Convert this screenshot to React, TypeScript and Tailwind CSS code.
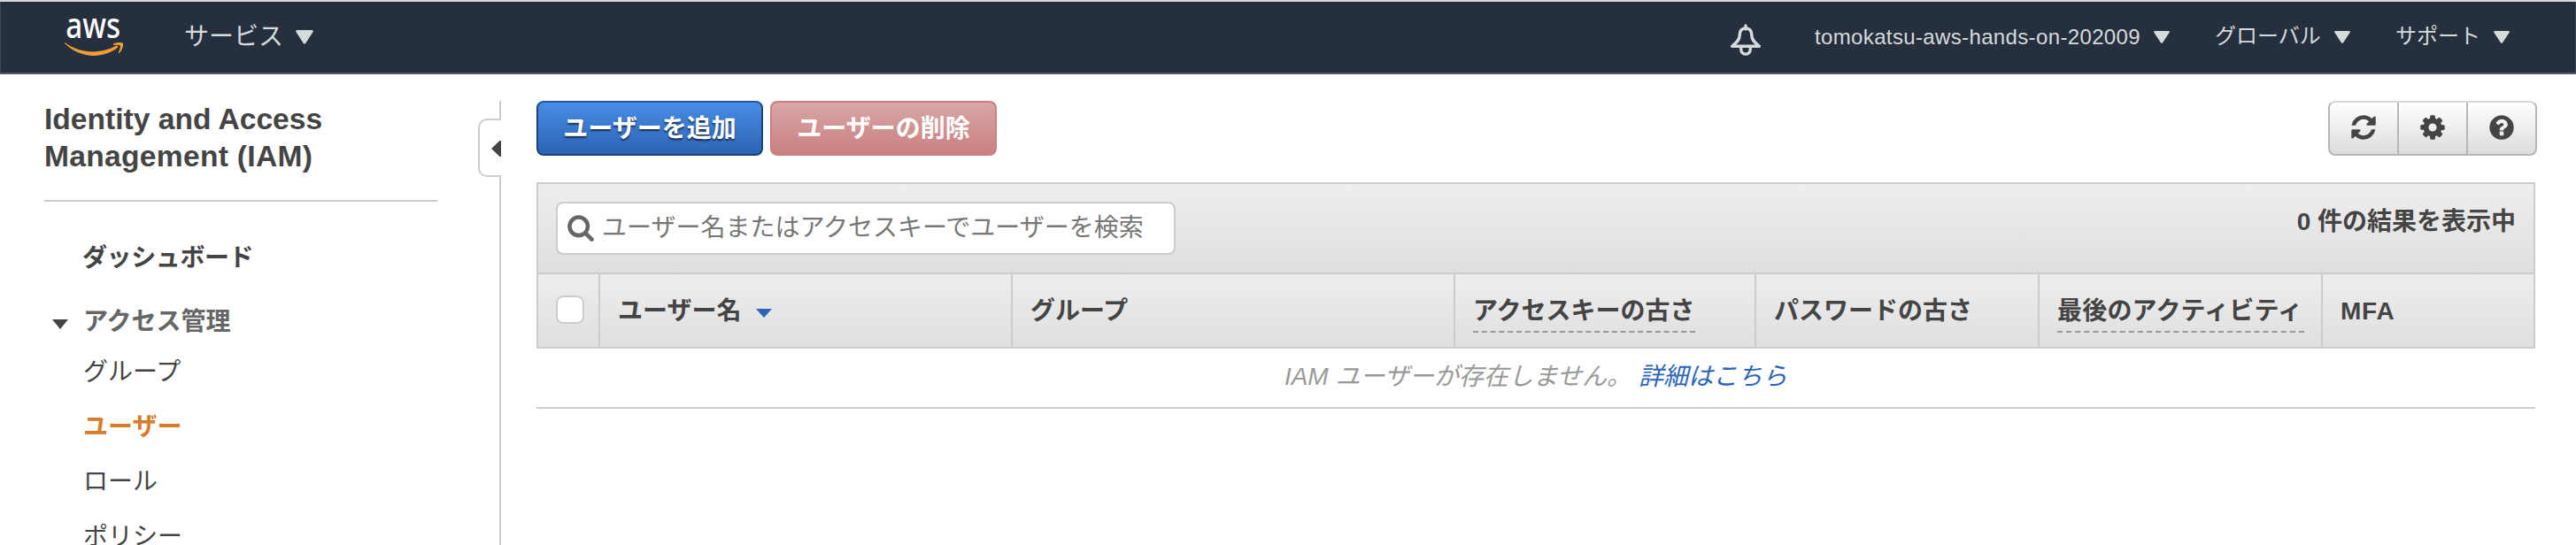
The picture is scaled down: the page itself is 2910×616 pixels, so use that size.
import React from "react";

const icons = {
  refresh:
    "M1639 1056q0 5-1 7-64 268-268 434.5t-478 166.5q-146 0-282.5-55t-243.5-157l-129 129q-19 19-45 19t-45-19-19-45v-448q0-26 19-45t45-19h448q26 0 45 19t19 45-19 45l-137 137q71 66 161 102t187 36q134 0 250-65t186-179q11-17 53-117 8-23 30-23h192q13 0 22.5 9.5t9.5 22.5zm25-800v448q0 26-19 45t-45 19h-448q-26 0-45-19t-19-45 19-45l138-138q-148-137-349-137-134 0-250 65t-186 179q-11 17-53 117-8 23-30 23h-199q-13 0-22.5-9.5t-9.5-22.5v-7q65-268 270-434.5t480-166.5q146 0 284 55.5t245 156.5l130-129q19-19 45-19t45 19 19 45z",
  cog: "M1152 896q0-106-75-181t-181-75-181 75-75 181 75 181 181 75 181-75 75-181zm512-109v222q0 12-8 23t-20 13l-185 28q-19 54-39 91 35 50 107 138 10 12 10 25t-9 23q-27 37-99 108t-94 71q-12 0-26-9l-138-108q-44 23-91 38-16 136-29 186-7 28-36 28h-222q-14 0-24.5-8.5t-11.5-21.5l-28-184q-49-16-90-37l-141 107q-10 9-25 9-14 0-25-11-126-114-165-168-7-10-7-23 0-12 8-23 15-21 51-66.5t54-70.5q-27-50-41-99l-183-27q-13-2-21-12.5t-8-23.5v-222q0-12 8-23t19-13l186-28q14-46 39-92-40-57-107-138-10-12-10-24 0-10 9-23 26-36 98.5-107.5t94.5-71.5q13 0 26 10l138 107q44-23 91-38 16-136 29-186 7-28 36-28h222q14 0 24.5 8.5t11.5 21.5l28 184q49 16 90 37l142-107q9-9 24-9 13 0 25 10 129 119 165 170 7 8 7 22 0 12-8 23-15 21-51 66.5t-54 70.5q26 50 41 98l183 28q13 2 21 12.5t8 23.5z",
  question:
    "M1024 1376v-192q0-14-9-23t-23-9h-192q-14 0-23 9t-9 23v192q0 14 9 23t23 9h192q14 0 23-9t9-23zm256-672q0-88-55.5-163t-138.5-116-170-41q-243 0-371 213-15 24 8 42l132 100q7 6 19 6 16 0 25-12 53-68 86-92 34-24 86-24 48 0 85.5 26t37.5 59q0 38-20 61t-68 45q-63 28-115.5 86.5t-52.5 125.5v36q0 14 9 23t23 9h192q14 0 23-9t9-23q0-19 21.5-49.5t54.5-49.5q32-18 49-28.5t46-35 44.5-48 28-60.5 12.5-81zm384 192q0 209-103 385.5t-279.5 279.5-385.5 103-385.5-103-279.5-279.5-103-385.5 103-385.5 279.5-279.5 385.5-103 385.5 103 279.5 279.5 103 385.5z",
  search:
    "M1216 832q0-185-131.5-316.5t-316.5-131.5-316.5 131.5-131.5 316.5 131.5 316.5 316.5 131.5 316.5-131.5 131.5-316.5zm512 832q0 52-38 90t-90 38q-54 0-90-38l-343-342q-179 124-399 124-143 0-273.5-55.5t-225-150-150-225-55.5-273.5 55.5-273.5 150-225 225-150 273.5-55.5 273.5 55.5 225 150 150 225 55.5 273.5q0 220-124 399l343 343q37 37 37 90z",
};

function Icon({ name, className }: { name: keyof typeof icons; className: string }) {
  return (
    <svg viewBox="0 0 1792 1792" className={className} fill="currentColor">
      <path d={icons[name]} />
    </svg>
  );
}

function NavCaret({ className }: { className: string }) {
  return (
    <svg viewBox="0 0 20 16" className={className} preserveAspectRatio="none" fill="#d5dbdb">
      <path d="M1.4 0H18.6Q20.4 .4 19.6 2L11.2 15Q10 16.6 8.8 15L.4 2Q-.4 .4 1.4 0Z" />
    </svg>
  );
}

function AwsLogo() {
  return (
    <svg viewBox="0 0 68 60" className="ml-[71px] mt-[4px] h-[60px] w-[68px] overflow-visible">
      <text
        transform="translate(2.2 36.800) scale(.85 1)"
        fontFamily="'Noto Sans'"
        fontSize="39"
        fontWeight="500"
        fill="#fff"
      >
        aws
      </text>
      <g transform="translate(0 13)" fill="#f09d34">
        <path d="M1.6 29.2C11 36.2 22 39.4 33.500 39.400 42 39.400 52 37 59.400 32.600 60.800 32 62.200 33.900 60.700 35.100 53.500 40.800 43.500 44 34.200 44 21.500 44 9.800 38.800 1.300 30.300.6 29.600 1 28.800 1.600 29.200Z" />
        <path d="M56.500 30.300C60.500 28.400 66 28.800 66.900 30 67.800 31.200 66.500 37.600 62.700 41 62.100 41.500 61.500 41.200 61.800 40.500 62.700 38.400 64.500 33.700 63.700 32.600 62.900 31.600 59 31.600 57 31.900 55.700 32 55.600 30.700 56.500 30.300Z" />
      </g>
    </svg>
  );
}

function Header() {
  return (
    <header className="h-[84px] border-t-2 border-b-2 border-t-[#d5d8df] border-b-[#545b66] bg-[#262f3e] text-[#d5dbdb]">
      <div className="flex h-[80px] items-start border-x border-[#3c4554]">
        <AwsLogo />
        <div className="ml-[68px] flex items-start pt-[20px]">
          <span className="w-[126px] text-[28px] leading-10">サービス</span>
          <NavCaret className="mt-3 h-4 w-5" />
        </div>
        <svg
          viewBox="0 0 36 36"
          className="mt-[25px] ml-[1600px] h-9 w-9"
          fill="none"
          stroke="#d5dbdb"
          strokeWidth="3.4"
          strokeLinejoin="round"
        >
          <path d="M18 4.800C13.500 5.200 11.200 8.500 11.200 13 11.200 18 8 21 2.600 25.300H33.400C28 21 24.800 18 24.800 13 24.800 8.500 22.500 5.200 18 4.800Z" />
          <path d="M18 2V6" strokeLinecap="round" />
          <path d="M12.700 26V28.500C12.700 36 23.300 36 23.300 28.500V26" />
        </svg>
        <div className="ml-[60px] flex items-start pt-[20px] text-2xl leading-10 whitespace-nowrap">
          <span className="w-[383px] tracking-[0.36px]">tomokatsu-aws-hands-on-202009</span>
          <NavCaret className="mt-[13px] h-[14px] w-[18px]" />
          <span className="-mt-px ml-[51px] w-[135px]">グローバル</span>
          <NavCaret className="mt-[13px] h-[14px] w-[18px]" />
          <span className="-mt-px ml-[51px] w-[111px]">サポート</span>
          <NavCaret className="mt-[13px] h-[14px] w-[18px]" />
        </div>
      </div>
    </header>
  );
}

function Sidebar() {
  return (
    <aside className="flex h-[532px] w-[540px] shrink-0 flex-col overflow-hidden pl-[50px] text-[28px] text-[#444]">
      <h1 className="mt-[30px] h-[114px] w-[444px] shrink-0 border-b-2 border-[#ccc] text-[33.6px] leading-[42px] font-bold">
        Identity and Access
        <br />
        <span className="tracking-[0.3px]">Management (IAM)</span>
      </h1>
      <nav className="flex shrink-0 flex-col pl-[44px] leading-10">
        <a className="mt-[44px] -ml-px font-bold tracking-[-0.4px]">ダッシュボード</a>
        <div className="mt-8 -ml-[35px] flex items-center text-[#666]">
          <svg viewBox="0 0 18 11" className="mt-[5px] mr-[17px] h-[11px] w-[18px]">
            <path d="M0 0H18L9 11Z" fill="#444" />
          </svg>
          <span className="font-bold">アクセス管理</span>
        </div>
        <a className="mt-[17px]">グループ</a>
        <a className="mt-[22px] font-bold text-[#d67d2a]">ユーザー</a>
        <a className="mt-[22px]">ロール</a>
        <a className="mt-[22px]">ポリシー</a>
      </nav>
    </aside>
  );
}

function Divider() {
  return (
    <div className="flex w-[26px] shrink-0 flex-col pt-[30px]">
      <div className="h-5 w-[26px] border-r-2 border-[#ccc]" />
      <div className="flex h-[66px] w-[26px] items-center justify-end rounded-l-[10px] border-2 border-r-0 border-[#ccc]">
        <svg viewBox="0 0 11 20" className="mt-[2px] h-5 w-[11px]">
          <path d="M11 1V19L9.500 19L0 10L9.500 1Z" fill="#444" />
        </svg>
      </div>
      <div className="w-[26px] flex-1 border-r-2 border-[#ccc]" />
    </div>
  );
}

const headCell = "h-full border-r-2 border-[#ccc] pl-5 pt-[22px]";

function UsersTable() {
  return (
    <div className="mt-[30px] w-[2258px] text-[28px] leading-10 text-[#444]">
      <div className="border-2 border-[#ccc]">
        <div className="flex h-[100px] items-start justify-between bg-linear-to-b from-[#eee] to-[#dfdfdf] pr-5 pl-5">
          <div className="mt-5 flex h-[60px] w-[700px] items-center rounded-lg border-2 border-[#ccc] bg-white pl-[10px]">
            <Icon name="search" className="-mt-[2px] h-8 w-8 text-[#666]" />
            <span className="mb-px ml-[8px] text-[#777]">ユーザー名またはアクセスキーでユーザーを検索</span>
          </div>
          <span className="mt-[23px] font-bold">0 件の結果を表示中</span>
        </div>
        <div className="flex h-[84px] border-t-2 border-[#ccc] bg-linear-to-b from-[#eee] to-[#dfdfdf] font-bold">
          <div className="h-full w-[70px] border-r-2 border-[#ccc] pt-6 pl-5">
            <div className="h-8 w-8 rounded-lg border-2 border-[#ccc] bg-white" />
          </div>
          <div className={`${headCell} flex w-[466px]`}>
            <span>ユーザー名</span>
            <svg viewBox="0 0 18 10" className="mt-[17px] ml-[17px] h-[10px] w-[18px]">
              <path d="M0 0H18L9 10Z" fill="#2a65b8" />
            </svg>
          </div>
          <div className={`${headCell} w-[500px]`}>グループ</div>
          <div className={`${headCell} w-[340px]`}>
            <span className="inline-block h-[44px] border-b-2 border-dashed border-[#999]">アクセスキーの古さ</span>
          </div>
          <div className={`${headCell} w-[320px]`}>パスワードの古さ</div>
          <div className={`${headCell} w-[320px]`}>
            <span className="inline-block h-[44px] w-[279px] border-b-2 border-dashed border-[#999] tracking-[0.2px] whitespace-nowrap">最後のアクティビティ</span>
          </div>
          <div className="pt-[22px] pl-5 tracking-[0.8px]">MFA</div>
        </div>
      </div>
      <div className="flex h-[68px] items-start justify-center border-b-2 border-[#ccc] pt-[12px] text-[#999] italic">
        <span>IAM ユーザーが存在しません。</span>
        <a className="ml-2 text-[#2a65b8]">詳細はこちら</a>
      </div>
    </div>
  );
}

function Main() {
  return (
    <main className="ml-10 pt-[30px]">
      <div className="flex w-[2260px] text-[28px] font-bold text-white">
        <button className="h-[62px] w-[256px] rounded-lg border-2 border-[#1c4278] border-t-[#2459a5] bg-linear-to-b from-[#488de6] to-[#2c63b3] pt-[2px] whitespace-nowrap [text-shadow:0_2px_2px_rgba(0,0,0,.6)]">
          ユーザーを追加
        </button>
        <button className="ml-2 h-[62px] w-[256px] rounded-lg border-2 border-[#c98080] bg-linear-to-b from-[#d9a6a6] to-[#c98080] pt-[2px] whitespace-nowrap">
          ユーザーの削除
        </button>
        <div className="ml-auto flex h-[62px] w-[236px] rounded-lg border-2 border-[#b7b7b7] border-t-[#d9d9d9] bg-linear-to-b from-white to-[#dcdcdc] text-[#444]">
          <div className="flex w-[78px] items-center justify-center border-r-2 border-[#b7b7b7]">
            <Icon name="refresh" className="mb-[2px] h-8 w-8" />
          </div>
          <div className="flex w-[78px] items-center justify-center border-r-2 border-[#b7b7b7]">
            <Icon name="cog" className="mb-[2px] h-8 w-8" />
          </div>
          <div className="flex w-[76px] items-center justify-center">
            <Icon name="question" className="mb-[2px] h-8 w-8" />
          </div>
        </div>
      </div>
      <UsersTable />
    </main>
  );
}

export default function App() {
  return (
    <div className="h-[616px] w-[2910px] overflow-hidden bg-white font-['Liberation_Sans','Noto_Sans_CJK_JP',sans-serif]" lang="ja">
      <Header />
      <div className="flex">
        <Sidebar />
        <Divider />
        <Main />
      </div>
    </div>
  );
}
